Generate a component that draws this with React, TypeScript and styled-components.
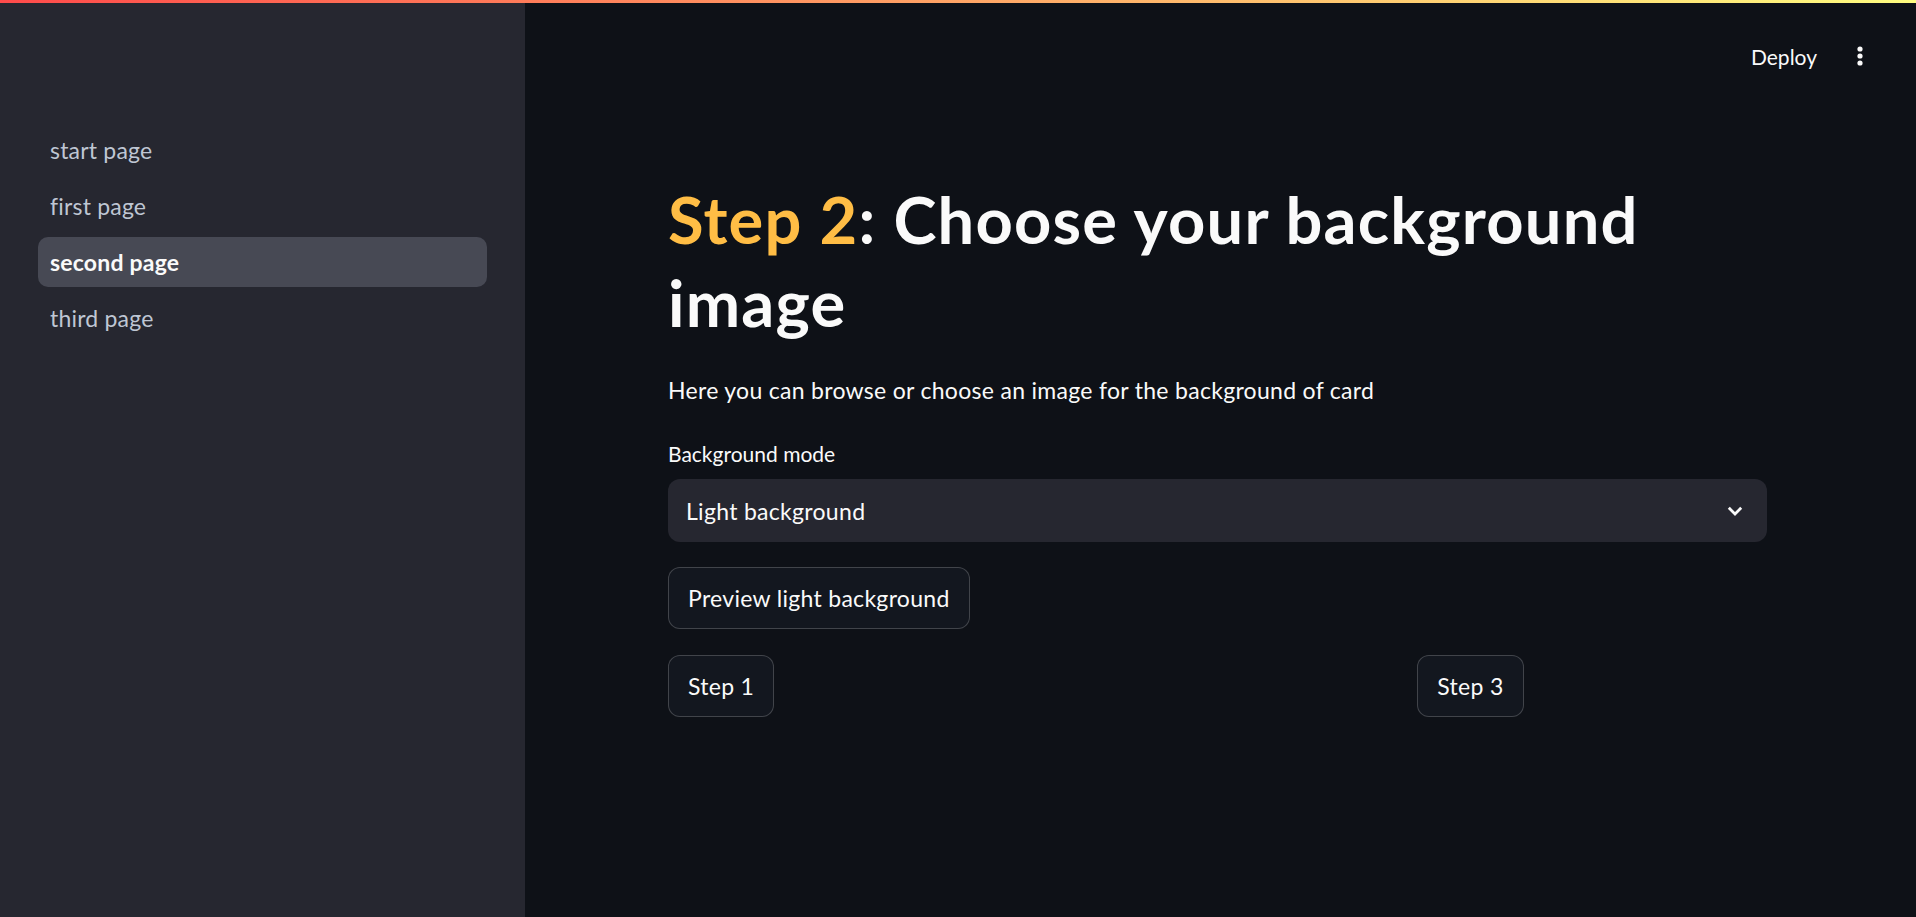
import { FC } from 'react';
import styled, { createGlobalStyle } from 'styled-components';

const GlobalStyle = createGlobalStyle`
    html, body {
        margin: 0;
        padding: 0;
        background: #0e1117;
        font-family: Lato, "Noto Sans", sans-serif;
        color: #fafafa;
    }
    * {
        box-sizing: border-box;
    }
`;

const pages = ['start page', 'first page', 'second page', 'third page'];
const activePage = 'second page';

const App: FC = () => {
    return (
        <>
            <GlobalStyle />
            <Decoration />
            <Shell>
                <Sidebar>
                    <NavList>
                        {pages.map((page) => (
                            <NavItem key={page} $active={page === activePage}>
                                {page}
                            </NavItem>
                        ))}
                    </NavList>
                </Sidebar>
                <Main>
                    <Header>
                        <DeployButton>Deploy</DeployButton>
                        <MenuButton aria-label="menu">
                            <svg width="6" height="20" viewBox="0 0 6 20">
                                <circle cx="3" cy="3" r="2.6" fill="#fafafa" />
                                <circle cx="3" cy="10" r="2.6" fill="#fafafa" />
                                <circle cx="3" cy="17" r="2.6" fill="#fafafa" />
                            </svg>
                        </MenuButton>
                    </Header>
                    <Block>
                        <Title>
                            <Accent>Step 2</Accent>: Choose your background image
                        </Title>
                        <Intro>Here you can browse or choose an image for the background of card</Intro>
                        <Label>Background mode</Label>
                        <Select>
                            <span>Light background</span>
                            <svg width="16" height="10" viewBox="0 0 16 10">
                                <path d="M1.8 1.8 L8 8 L14.2 1.8" fill="none" stroke="#fafafa" strokeWidth="2.8" />
                            </svg>
                        </Select>
                        <Button>Preview light background</Button>
                        <Columns>
                            <div><Button>Step 1</Button></div>
                            <div />
                            <div><Button>Step 3</Button></div>
                        </Columns>
                    </Block>
                </Main>
            </Shell>
        </>
    );
};

export default App;

const Decoration = styled.div`
    height: 3px;
    background: linear-gradient(90deg, #ff4b4b, #fffd80);
`;

const Shell = styled.div`
    display: flex;
    height: 914px;
`;

const Sidebar = styled.aside`
    width: 525px;
    flex-shrink: 0;
    background: #262730;
    padding: 122px 38px 0 38px;
`;

const NavList = styled.nav`
    display: flex;
    flex-direction: column;
    gap: 6px;
`;

const NavItem = styled.div<{ $active?: boolean }>`
    height: 50px;
    line-height: 50px;
    padding: 0 12px;
    border-radius: 10px;
    font-size: 23px;
    letter-spacing: 0.2px;
    font-weight: ${(p) => (p.$active ? 700 : 400)};
    color: ${(p) => (p.$active ? '#fafafa' : '#bfc6d3')};
    background: ${(p) => (p.$active ? '#474954' : 'transparent')};
`;

const Main = styled.main`
    flex: 1;
    background: #0e1117;
`;

const Header = styled.header`
    height: 106px;
    display: flex;
    align-items: center;
    justify-content: flex-end;
    padding-right: 36px;
`;

const DeployButton = styled.span`
    font-size: 21px;
    color: #fafafa;
    margin-right: 23px;
`;

const MenuButton = styled.span`
    width: 40px;
    height: 40px;
    display: flex;
    align-items: center;
    justify-content: center;
`;

const Block = styled.div`
    width: 1099px;
    margin-left: 143px;
    display: flex;
    flex-direction: column;
    align-items: flex-start;
`;

const Title = styled.h1`
    margin: 69px 0 0;
    font-size: 65px;
    line-height: 83px;
    letter-spacing: 1.2px;
    font-weight: 700;
    color: #fafafa;
`;

const Accent = styled.span`
    color: #ffbd45;
`;

const Intro = styled.p`
    margin: 26px 0 0;
    font-size: 23px;
    line-height: 40px;
    letter-spacing: 0.3px;
`;

const Label = styled.div`
    margin-top: 30px;
    font-size: 21px;
    line-height: 28px;
`;

const Select = styled.div`
    margin-top: 11px;
    width: 100%;
    height: 63px;
    background: #262730;
    border-radius: 12px;
    display: flex;
    align-items: center;
    justify-content: space-between;
    padding: 0 24px 0 18px;
    font-size: 23px;
    letter-spacing: 0.3px;
`;

const Button = styled.button`
    margin-top: 25px;
    height: 62px;
    padding: 0 19px;
    background: #13171f;
    border: 1px solid rgba(250, 250, 250, 0.2);
    border-radius: 12px;
    color: #fafafa;
    font-family: inherit;
    font-size: 23px;
    letter-spacing: 0.3px;
`;

const Columns = styled.div`
    width: 100%;
    display: grid;
    grid-template-columns: repeat(3, 1fr);
    gap: 25px;
    margin-top: 1px;
`;
